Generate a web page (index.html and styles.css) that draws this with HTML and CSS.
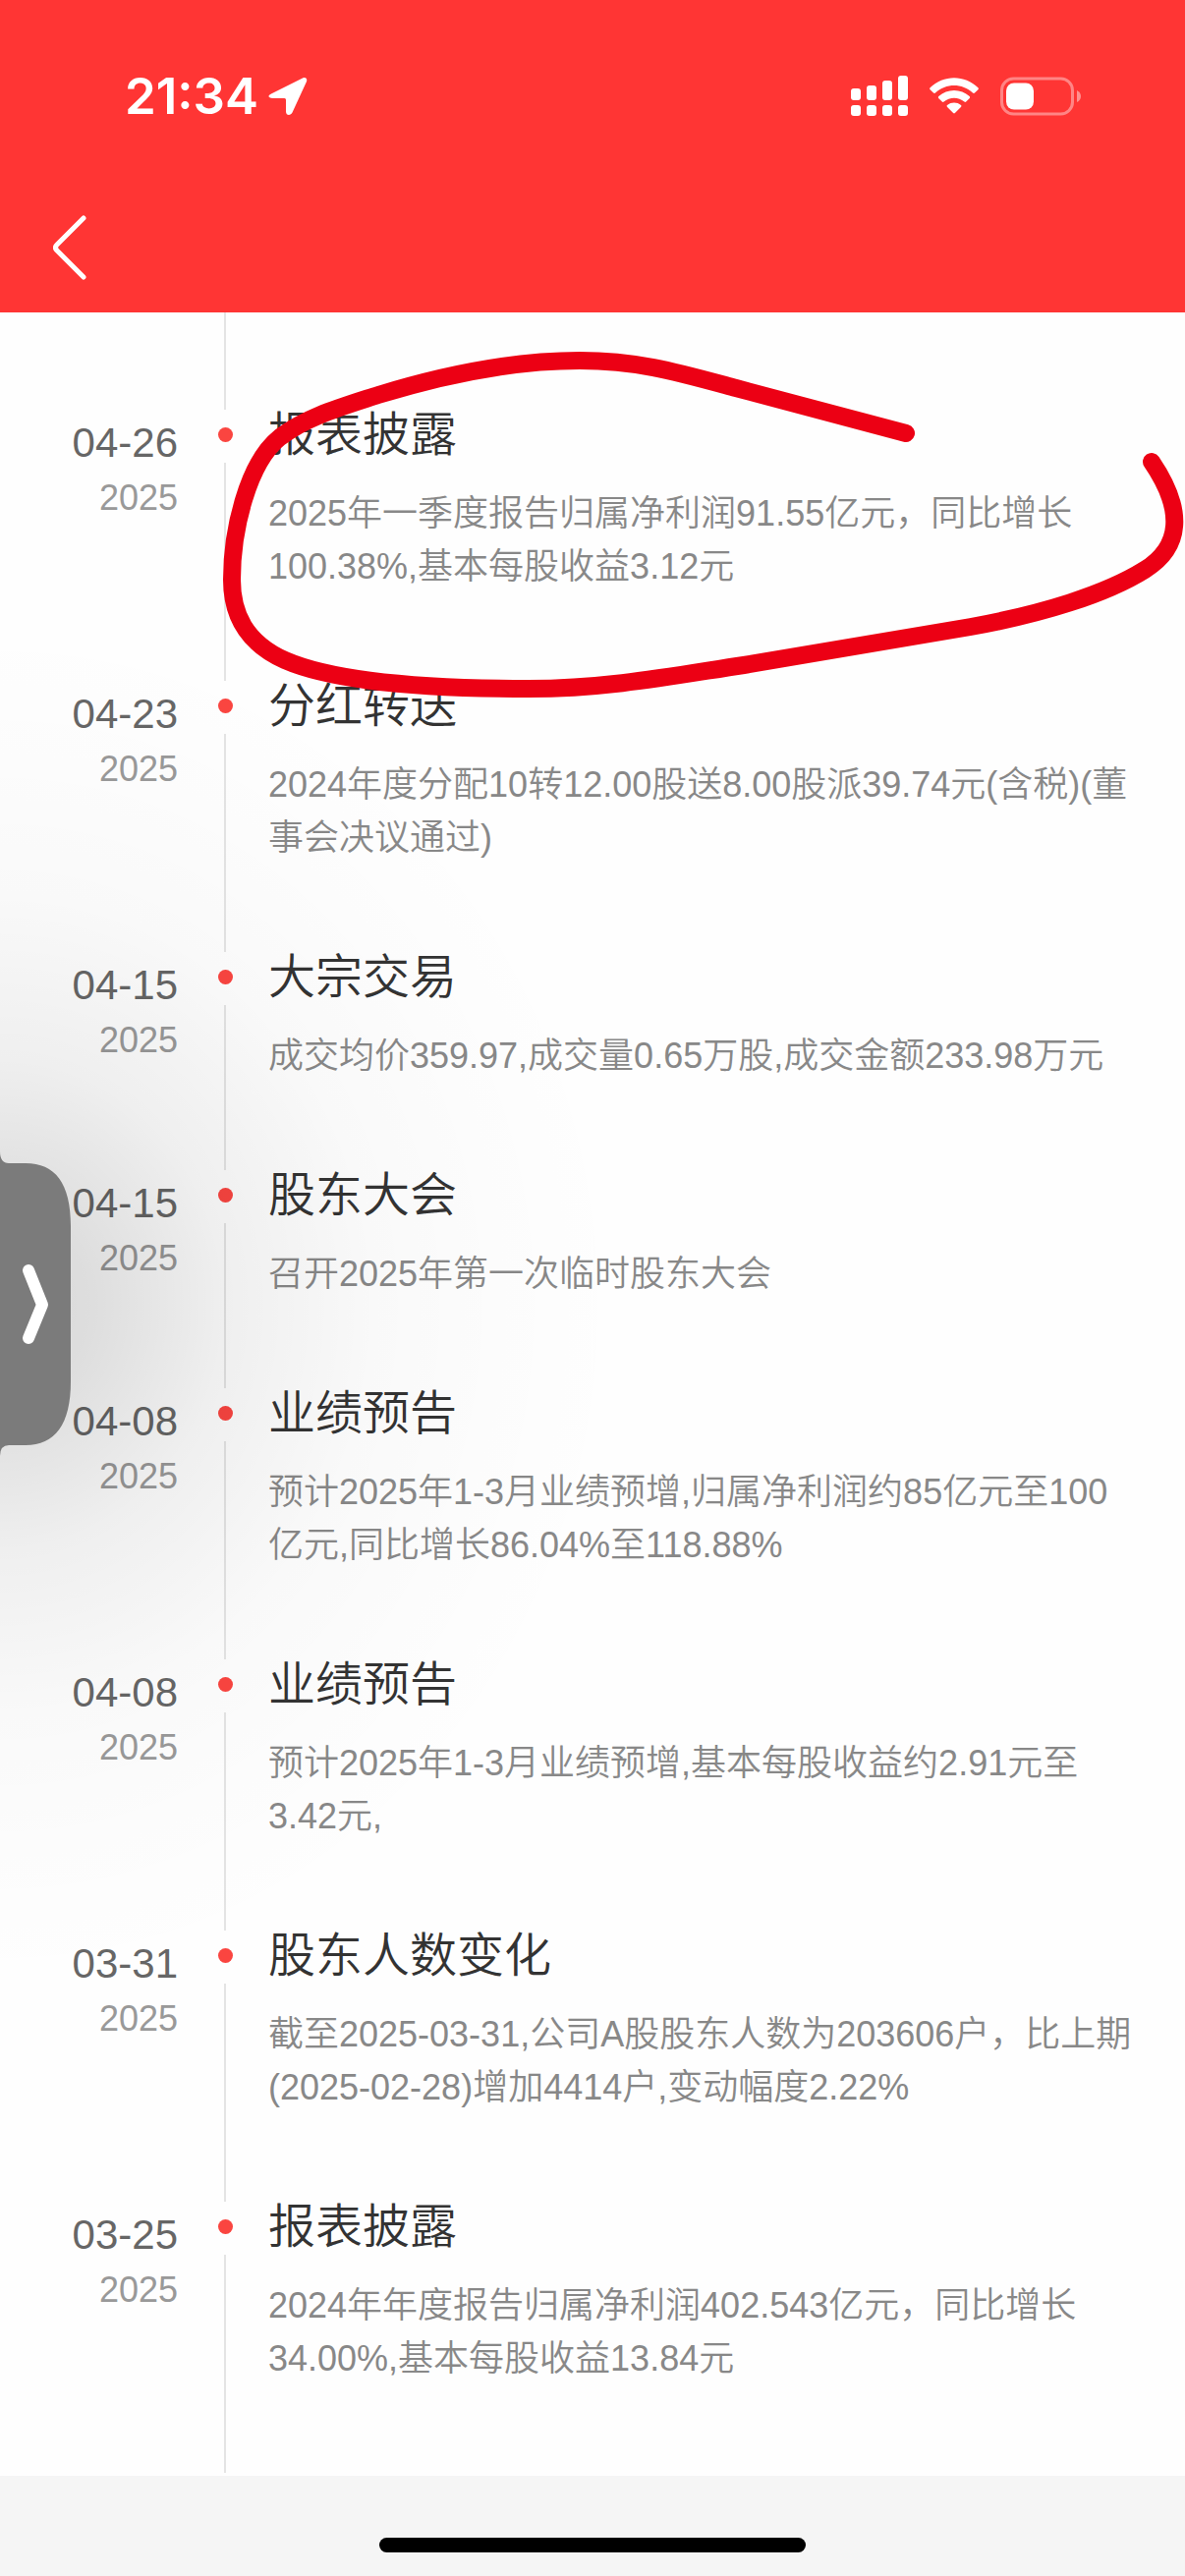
FILE: index.html
```html
<!DOCTYPE html>
<html lang="zh-CN">
<head>
    <meta charset="UTF-8">
    <meta name="viewport" content="width=device-width, initial-scale=1">
    <title>大事提醒</title>
    <link rel="stylesheet" href="styles.css">
</head>
<body>
    <header class="header">
        <div class="status-bar">
            <span class="time">21:34</span>
            <svg class="location" width="40" height="40" viewBox="0 0 40 40" aria-hidden="true">
                <path d="M3 17.500 35 1.500C38 0 40 2 39 5L24.500 36.500C23 40 18 40 18 35.500V23.500Q18 22 16.500 22H4.500C0 22-1 19.500 3 17.500Z"/>
            </svg>
            <div class="status-icons">
                <svg width="58" height="42" viewBox="0 0 58 42" aria-hidden="true">
                    <rect x="0" y="13" width="10" height="12" rx="3"/>
                    <rect x="16" y="10" width="10" height="15" rx="3"/>
                    <rect x="32" y="5" width="10" height="20" rx="3"/>
                    <rect x="48" y="0" width="10" height="25" rx="3"/>
                    <rect x="0" y="30" width="10" height="11" rx="3"/>
                    <rect x="16" y="30" width="10" height="11" rx="3"/>
                    <rect x="32" y="30" width="10" height="11" rx="3"/>
                    <rect x="48" y="30" width="10" height="11" rx="3"/>
                </svg>
                <svg width="50" height="38" viewBox="0 0 50 38" aria-hidden="true">
                    <path d="M.6 12.200Q-.3 11.200.6 10.300C14-3.200 36-3.200 49.400 10.300Q50.300 11.200 49.400 12.200L46 15.600Q45 16.500 44 15.600C33.500 5.600 16.500 5.600 6 15.600Q5 16.500 4 15.600Z"/>
                    <path d="M9.200 20.900Q8.400 20 9.300 19.100C18 10.900 32 10.900 40.700 19.100Q41.600 20 40.800 20.900L37.200 24.500Q36.300 25.300 35.400 24.500C29.500 19.400 20.500 19.400 14.600 24.500Q13.700 25.300 12.800 24.500Z"/>
                    <path d="M17.900 29.700Q17.100 28.800 18 28C22 24.700 28 24.700 32 28Q32.900 28.800 32.100 29.700L25.900 36Q25 36.800 24.100 36Z"/>
                </svg>
                <svg width="82" height="40" viewBox="0 0 82 40" aria-hidden="true">
                    <rect class="battery-case" x="1.500" y="2" width="72" height="36" rx="12"/>
                    <rect x="6" y="6.500" width="28" height="27" rx="8"/>
                    <path class="battery-tip" d="M78 14Q82 16 82 20T78 26Z"/>
                </svg>
            </div>
        </div>
        <nav class="nav">
            <button class="back" type="button" aria-label="返回">
                <svg width="34" height="66" viewBox="0 0 34 66" aria-hidden="true">
                    <path d="M31 3 4 30Q1 33 4 36L31 63"/>
                </svg>
            </button>
        </nav>
    </header>

    <main class="timeline">
        <div class="lead"></div>
        <ol class="events">
            <li class="event">
                <time class="date" datetime="2025-04-26">04-26<span class="year">2025</span></time>
                <div class="axis"></div>
                <div class="content">
                    <h2>报表披露</h2>
                    <p>2025年一季度报告归属净利润91.55亿元，同比增长100.38%,基本每股收益3.12元</p>
                </div>
            </li>
            <li class="event">
                <time class="date" datetime="2025-04-23">04-23<span class="year">2025</span></time>
                <div class="axis"></div>
                <div class="content">
                    <h2>分红转送</h2>
                    <p>2024年度分配10转12.00股送8.00股派39.74元(含税)(董事会决议通过)</p>
                </div>
            </li>
            <li class="event">
                <time class="date" datetime="2025-04-15">04-15<span class="year">2025</span></time>
                <div class="axis"></div>
                <div class="content">
                    <h2>大宗交易</h2>
                    <p>成交均价359.97,成交量0.65万股,成交金额233.98万元</p>
                </div>
            </li>
            <li class="event">
                <time class="date" datetime="2025-04-15">04-15<span class="year">2025</span></time>
                <div class="axis"></div>
                <div class="content">
                    <h2>股东大会</h2>
                    <p>召开2025年第一次临时股东大会</p>
                </div>
            </li>
            <li class="event">
                <time class="date" datetime="2025-04-08">04-08<span class="year">2025</span></time>
                <div class="axis"></div>
                <div class="content">
                    <h2>业绩预告</h2>
                    <p>预计2025年1-3月业绩预增,归属净利润约85亿元至100亿元,同比增长86.04%至118.88%</p>
                </div>
            </li>
            <li class="event">
                <time class="date" datetime="2025-04-08">04-08<span class="year">2025</span></time>
                <div class="axis"></div>
                <div class="content">
                    <h2>业绩预告</h2>
                    <p>预计2025年1-3月业绩预增,基本每股收益约2.91元至3.42元,</p>
                </div>
            </li>
            <li class="event">
                <time class="date" datetime="2025-03-31">03-31<span class="year">2025</span></time>
                <div class="axis"></div>
                <div class="content">
                    <h2>股东人数变化</h2>
                    <p>截至2025-03-31,公司A股股东人数为203606户，比上期(2025-02-28)增加4414户,变动幅度2.22%</p>
                </div>
            </li>
            <li class="event">
                <time class="date" datetime="2025-03-25">03-25<span class="year">2025</span></time>
                <div class="axis"></div>
                <div class="content">
                    <h2>报表披露</h2>
                    <p>2024年年度报告归属净利润402.543亿元，同比增长34.00%,基本每股收益13.84元</p>
                </div>
            </li>
        </ol>

        <!-- hand-drawn mark around the first event -->
        <svg class="mark" width="981" height="370" viewBox="225 350 981 370" aria-hidden="true">
            <path d="M922 441 749 395C690 379 650 367 590 367C520 367 450 382 385 402C345 415 313 424 285 445C252 471 236 540 236 590C236 625 250 654 290 672C345 696 450 701 538 701C620 701 690 687 757 677L988 638C1060 625 1125 605 1165 580C1202 557 1206 520 1172 470"/>
        </svg>
    </main>

    <div class="side-shadow"></div>
    <button class="handle" type="button" aria-label="展开">
        <svg width="72" height="310" viewBox="0 0 72 310" aria-hidden="true">
            <path class="handle-body" d="M0 0Q0 12 9 12H26C56 12 72 32 72 76V234C72 278 56 299 26 299H9Q0 299 0 310Z"/>
            <path class="handle-arrow" d="M29 121 43 156 29 190"/>
        </svg>
    </button>

    <footer class="footer">
        <div class="home-indicator"></div>
    </footer>
</body>
</html>
```
FILE: styles.css
```css
* {
    box-sizing: border-box;
}
body {
    display: flex;
    flex-direction: column;
    height: 100vh;
    margin: 0;
    overflow: hidden;
    position: relative;
    background-color: #fefefe;
    font-family: "Liberation Sans", "Noto Sans CJK SC", sans-serif;
}
svg {
    display: block;
}
button {
    padding: 0;
    border: none;
    background: none;
    cursor: pointer;
}

/* header */
.header {
    background-color: #ff3534;
    height: 318px;
    flex: none;
}
.status-bar {
    display: flex;
    align-items: center;
    gap: 10px;
    height: 195px;
    padding: 0 106px 0 127px;
    color: white;
    fill: white;
}
.time {
    font-family: Inter, sans-serif;
    font-size: 51px;
    font-weight: 600;
    line-height: 60px;
}
.status-icons {
    display: flex;
    align-items: center;
    gap: 22px;
    margin-left: auto;
}
.battery-case {
    fill: none;
    stroke: white;
    stroke-width: 3;
    opacity: 0.4;
}
.battery-tip {
    opacity: 0.45;
}
.nav {
    padding: 24px 54px;
}
.back path {
    fill: none;
    stroke: white;
    stroke-width: 5;
    stroke-linecap: round;
}

/* timeline */
.timeline {
    position: relative;
    flex: 1;
    min-height: 0;
    overflow: hidden;
}
.lead {
    width: 2px;
    height: 99px;
    margin-left: 228px;
    background-color: #e4e4e4;
}
.events {
    list-style: none;
    margin: 0;
    padding: 0;
}
.event {
    display: grid;
    grid-template-columns: 181px 92px 1fr;
    padding-right: 46px;
}
.date {
    padding-top: 9px;
    color: #666;
    font-size: 42px;
    line-height: 50px;
    text-align: right;
}
.year {
    display: block;
    margin-top: 10px;
    color: #999;
    font-size: 36px;
    line-height: 42px;
}
.axis {
    display: flex;
    flex-direction: column;
    align-items: center;
    width: 96px;
}
.axis::before {
    content: "";
    width: 15px;
    height: 15px;
    margin: 18px 0 21px;
    border-radius: 50%;
    background-color: #fa4540;
}
.axis::after {
    content: "";
    flex: 1;
    width: 2px;
    background-color: #e4e4e4;
}
.content {
    padding-bottom: 89px;
}
.content h2 {
    margin: 0;
    color: #333;
    font-size: 48px;
    font-weight: 350;
    line-height: 52px;
}
.content p {
    margin: 27px 0 0;
    color: #888;
    font-size: 36px;
    font-weight: 350;
    line-height: 54px;
}
.mark {
    position: absolute;
    top: 32px;
    left: 225px;
    fill: none;
    stroke: #ec0014;
    stroke-width: 18;
    stroke-linecap: round;
    stroke-linejoin: round;
}

/* side handle */
.side-shadow {
    position: absolute;
    top: 628px;
    left: 0;
    width: 640px;
    height: 1400px;
    background: radial-gradient(640px 700px at 0 50%, rgba(0, 0, 0, 0.15), rgba(0, 0, 0, 0.13) 14%, rgba(0, 0, 0, 0.06) 36%, rgba(0, 0, 0, 0.02) 60%, rgba(0, 0, 0, 0.006) 80%, transparent);
    pointer-events: none;
}
.handle {
    position: absolute;
    top: 1172px;
    left: 0;
}
.handle-body {
    fill: #7b7b7b;
}
.handle-arrow {
    fill: none;
    stroke: white;
    stroke-width: 12;
    stroke-linecap: round;
    stroke-linejoin: round;
}

/* footer */
.footer {
    display: flex;
    flex: none;
    justify-content: center;
    align-items: flex-end;
    height: 102px;
    padding-bottom: 24px;
    background-color: #f5f5f5;
}
.home-indicator {
    width: 36%;
    height: 15px;
    border-radius: 8px;
    background-color: black;
}
```
